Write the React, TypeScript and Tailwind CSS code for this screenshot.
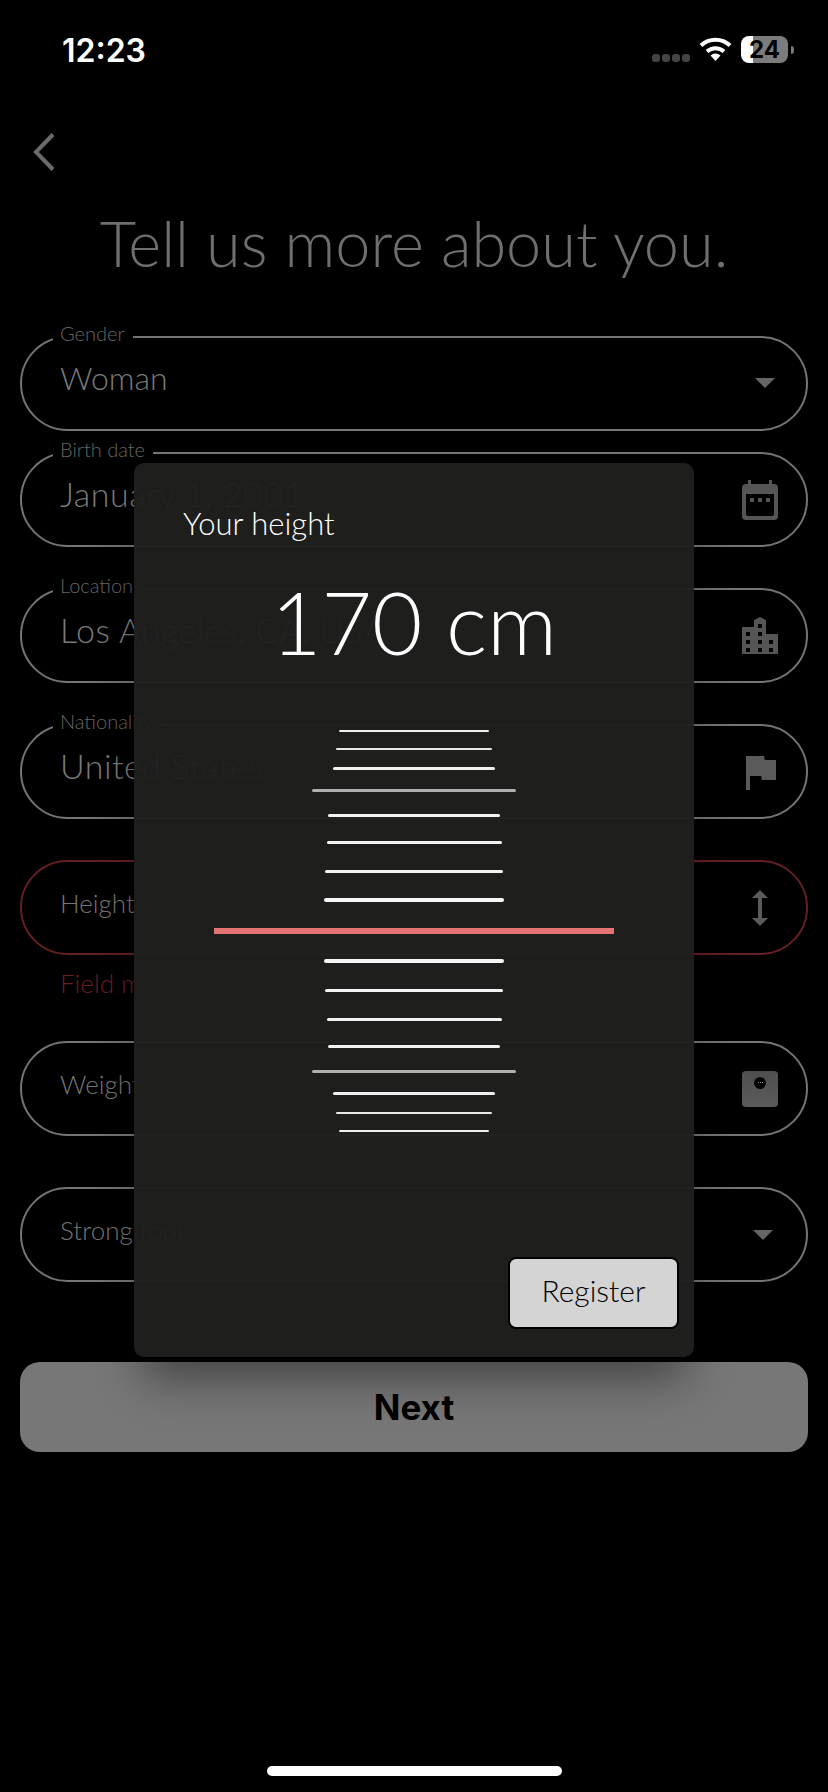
import React from 'react';
import { MdFlag, MdHeight } from 'react-icons/md';

const display = { fontFamily: '"Lato", "Liberation Sans", sans-serif' };

const CaretIcon = () => (
  <svg width="20" height="10" viewBox="0 0 20 10" className="block">
    <path d="M0 0h20L10 10z" fill="#666666" />
  </svg>
);

const CalendarIcon = () => (
  <svg width="36" height="40" viewBox="0 0 36 40" className="block">
    <path
      d="M6 0h3v4h18V0h3v4h2a4 4 0 0 1 4 4v28a4 4 0 0 1-4 4H4a4 4 0 0 1-4-4V8a4 4 0 0 1 4-4h2z M4 14v20a2 2 0 0 0 2 2h24a2 2 0 0 0 2-2V14z"
      fill="#555555"
      fillRule="evenodd"
    />
    <rect x="8" y="18" width="4" height="4" fill="#555555" />
    <rect x="16" y="18" width="4" height="4" fill="#555555" />
    <rect x="24" y="18" width="4" height="4" fill="#555555" />
  </svg>
);

const BuildingIcon = () => (
  <svg width="36" height="37" viewBox="0 0 36 37" className="block">
    <path
      d="M0 10h12V3l6-3 6 3v14h12v20H0z M4 15v4h4v-4z M4 23v4h4v-4z M4 31v4h4v-4z M16 7v4h4V7z M16 15v4h4v-4z M16 23v4h4v-4z M16 31v4h4v-4z M27 23v4h4v-4z M27 31v4h4v-4z"
      fill="#555555"
      fillRule="evenodd"
    />
  </svg>
);

const WeightIcon = () => (
  <div className="w-9 h-9 rounded-[4px] bg-gradient-to-b from-[#4e4e4e] to-[#5c5c5c] flex justify-center pt-[6px]">
    <div className="w-3 h-3 rounded-full bg-black flex items-center justify-center gap-px">
      <span className="w-px h-px bg-[#999999]" />
      <span className="w-px h-px bg-[#999999]" />
      <span className="w-px h-px bg-[#999999]" />
    </div>
  </div>
);

type FieldProps = {
  label?: string;
  value?: string;
  placeholder?: string;
  icon: React.ReactNode;
  error?: boolean;
  className?: string;
  iconClass?: string;
  valueClass?: string;
};

const Field = ({ label, value, placeholder, icon, error, className, iconClass, valueClass }: FieldProps) => (
  <div
    className={`relative h-[95px] rounded-[48px] border-2 flex items-center justify-between pl-[38px] ${
      error ? 'border-[#661f22]' : 'border-[#747474]'
    } ${className ?? ''}`}
  >
    {label && (
      <span className="absolute left-[31px] -top-[17px] bg-black pl-[7px] pr-2 text-[20px] leading-[24px] font-light text-[#666666]" style={display}>
        {label}
      </span>
    )}
    {value && (
      <span className={`leading-[40px] -mt-[12px] font-light text-[#7a7a7a] ${valueClass ?? 'text-[34px] tracking-[0.5px]'}`} style={display}>
        {value}
      </span>
    )}
    {placeholder && <span className="text-[26px] leading-[32px] -mt-[10px] font-light text-[#767676]" style={display}>{placeholder}</span>}
    <div className={iconClass}>{icon}</div>
  </div>
);

const rulerTop = [
  { w: 'w-[150px]', h: 'h-[2px]', gap: 'mt-0', c: 'bg-[#efefef]' },
  { w: 'w-[156px]', h: 'h-[2px]', gap: 'mt-[16px]', c: 'bg-[#e8e8e8]' },
  { w: 'w-[162px]', h: 'h-[3px]', gap: 'mt-[17px]', c: 'bg-[#f0f0f0]' },
  { w: 'w-[204px]', h: 'h-[3px]', gap: 'mt-[19px]', c: 'bg-[#b0b0b0]' },
  { w: 'w-[172px]', h: 'h-[3px]', gap: 'mt-[22px]', c: 'bg-[#f2f2f2]' },
  { w: 'w-[175px]', h: 'h-[3px]', gap: 'mt-[24px]', c: 'bg-[#f2f2f2]' },
  { w: 'w-[178px]', h: 'h-[3px]', gap: 'mt-[26px]', c: 'bg-[#f4f4f4]' },
  { w: 'w-[180px]', h: 'h-[4px]', gap: 'mt-[25px]', c: 'bg-[#f6f6f6]' },
];

const rulerBottom = [
  { w: 'w-[180px]', h: 'h-[4px]', gap: 'mt-[25px]', c: 'bg-[#f6f6f6]' },
  { w: 'w-[178px]', h: 'h-[3px]', gap: 'mt-[26px]', c: 'bg-[#f4f4f4]' },
  { w: 'w-[175px]', h: 'h-[3px]', gap: 'mt-[26px]', c: 'bg-[#f2f2f2]' },
  { w: 'w-[172px]', h: 'h-[3px]', gap: 'mt-[24px]', c: 'bg-[#f2f2f2]' },
  { w: 'w-[204px]', h: 'h-[3px]', gap: 'mt-[22px]', c: 'bg-[#b0b0b0]' },
  { w: 'w-[162px]', h: 'h-[3px]', gap: 'mt-[19px]', c: 'bg-[#f0f0f0]' },
  { w: 'w-[156px]', h: 'h-[2px]', gap: 'mt-[17px]', c: 'bg-[#e8e8e8]' },
  { w: 'w-[150px]', h: 'h-[2px]', gap: 'mt-[16px]', c: 'bg-[#efefef]' },
];

const HeightModal = () => (
  <div className="absolute left-[134px] top-[463px] w-[560px] h-[894px] rounded-[10px] bg-[#1f1f1e]/96 shadow-[0_30px_44px_-10px_rgba(0,0,0,0.45)] flex flex-col">
    <div className="pl-[49px] pt-[42px] text-[31px] leading-[36px] font-light text-white" style={display}>Your height</div>
    <div className="mt-[33px] text-center text-[87px] leading-[96px] font-light text-white" style={display}>170 cm</div>
    <div className="mt-[60px] flex flex-col items-center">
      {rulerTop.map((l, i) => (
        <div key={i} className={`rounded-full ${l.w} ${l.h} ${l.gap} ${l.c}`} />
      ))}
      <div className="w-[400px] h-[6px] mt-[26px] bg-[#e57373]" />
      {rulerBottom.map((l, i) => (
        <div key={i} className={`rounded-full ${l.w} ${l.h} ${l.gap} ${l.c}`} />
      ))}
    </div>
    <div className="mt-auto mb-[28px] mr-[15px] self-end w-[171px] h-[72px] pb-[5px] rounded-[8px] border-2 border-black bg-[#d4d4d4] flex items-center justify-center text-[30px] font-light text-black" style={display}>
      Register
    </div>
  </div>
);

export default function App() {
  return (
    <div className="relative w-[828px] h-[1792px] bg-black overflow-hidden">
      <div className="flex items-start justify-between h-[133px] pl-[62px] pr-[34px] pt-[32px]">
        <span className="text-[32px] leading-[38px] font-semibold text-white" style={{ fontFamily: '"Inter", sans-serif' }}>12:23</span>
        <div className="flex items-center pt-[4px]">
          <div className="flex gap-[2px] mt-[16px] mr-[9px]">
            {[0, 1, 2, 3].map(i => <span key={i} className="w-[8px] h-[8px] rounded-[3px] bg-[#444444]" />)}
          </div>
          <svg width="33" height="24" viewBox="0 0 33 24" className="mr-[9px] -mt-[2px]">
            <path d="M2 8.5a21 21 0 0 1 29 0" fill="none" stroke="#ffffff" strokeWidth="4" />
            <path d="M8 14.5a12.5 12.5 0 0 1 17 0" fill="none" stroke="#ffffff" strokeWidth="4" />
            <path d="M11.5 18.5a7 7 0 0 1 10 0L16.5 24z" fill="#ffffff" />
          </svg>
          <div className="relative w-[47px] h-[27px] rounded-[8px] bg-gradient-to-r from-white from-[26%] to-[#7c7c7c] to-[26%] flex items-center justify-center text-[24px] font-bold text-black" style={{ fontFamily: '"Inter", sans-serif' }}>
            24
          </div>
          <span className="ml-[3px] w-[3px] h-[8px] rounded-r-full bg-[#777777]" />
        </div>
      </div>

      <div className="pl-[33px] h-[38px]">
        <svg width="22" height="38" viewBox="0 0 22 38" className="block">
          <path d="M20 1.5 3 19l17 17.5" fill="none" stroke="#6b6b6b" strokeWidth="4" />
        </svg>
      </div>

      <h1 className="mt-[36px] text-center text-[63px] leading-[72px] font-light text-[#6f6f6f]" style={display}>
        Tell us more about you.
      </h1>

      <div className="mt-[57px] px-5">
        <Field label="Gender" value="Woman" valueClass="text-[32px]" icon={<CaretIcon />} iconClass="mr-[31px] -mt-[2px]" />
        <Field label="Birth date" value="January 1, 2001" icon={<CalendarIcon />} className="mt-[21px]" iconClass="mr-[28px]" />
        <Field label="Location" value="Los Angeles, CA, USA" icon={<BuildingIcon />} className="mt-[41px]" iconClass="mr-[28px]" />
        <Field label="Nationality" value="United States" icon={<MdFlag size={48} color="#5a5a5a" />} className="mt-[41px]" iconClass="mr-[22px]" />
        <Field placeholder="Height" icon={<MdHeight size={48} color="#5a5a5a" />} error className="mt-[41px]" iconClass="mr-[22px]" />
        <div className="pl-[40px] mt-[12px] h-[34px] text-[26px] leading-[32px] font-light text-[#6a1f22]" style={display}>Field must be filled</div>
        <Field placeholder="Weight" icon={<WeightIcon />} className="mt-[40px]" iconClass="mr-[28px]" />
        <Field placeholder="Strong foot" icon={<CaretIcon />} className="mt-[51px]" iconClass="mr-[33px]" />
        <div className="mt-[80px] h-[90px] rounded-[20px] bg-[#777777] flex items-center justify-center text-[35px] font-bold text-black" style={{ fontFamily: '"Inter", sans-serif' }}>
          Next
        </div>
      </div>

      <HeightModal />

      <div className="absolute left-[267px] top-[1766px] w-[295px] h-[10px] rounded-full bg-white" />
    </div>
  );
}
